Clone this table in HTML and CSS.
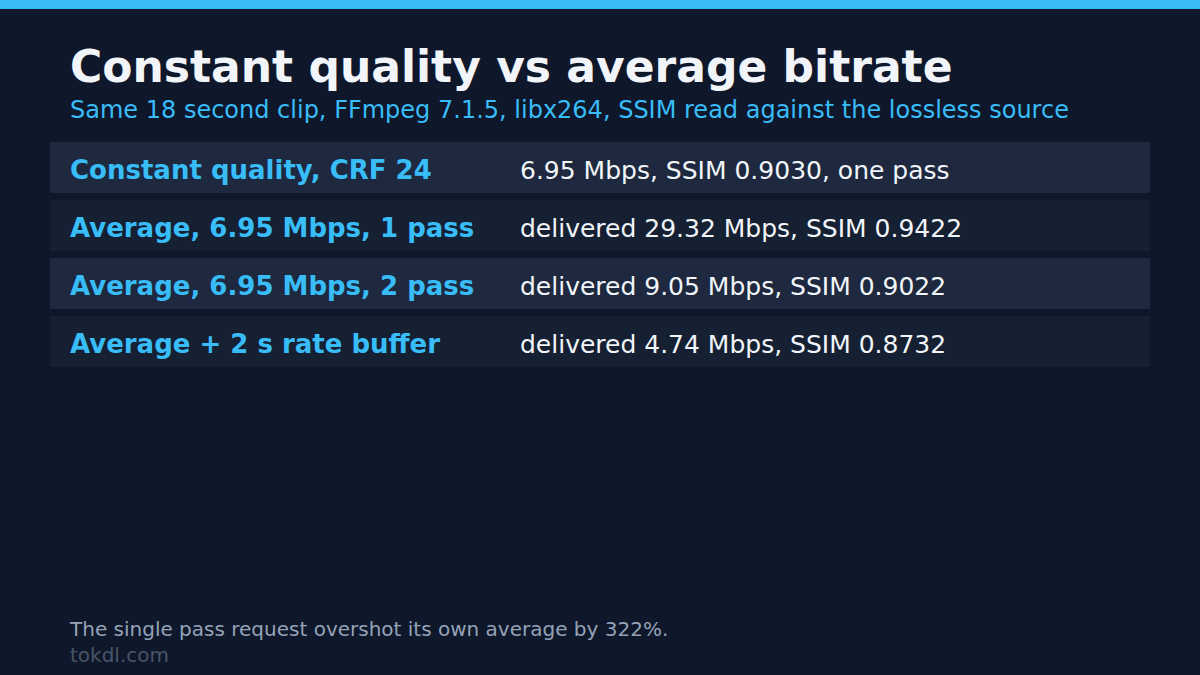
FILE: index.html
```html
<!DOCTYPE html>
<html>
<head>
<meta charset="utf-8">
<link rel="stylesheet" href="styles.css">
</head>
<body>
<div class="topbar"></div>
<main class="page">
  <h1 class="title">Constant quality vs average bitrate</h1>
  <p class="subtitle">Same 18 second clip, FFmpeg 7.1.5, libx264, SSIM read against the lossless source</p>
  <div class="rows">
    <div class="row odd"><span class="label">Constant quality, CRF 24</span><span class="value">6.95 Mbps, SSIM 0.9030, one pass</span></div>
    <div class="row even"><span class="label">Average, 6.95 Mbps, 1 pass</span><span class="value">delivered 29.32 Mbps, SSIM 0.9422</span></div>
    <div class="row odd"><span class="label">Average, 6.95 Mbps, 2 pass</span><span class="value">delivered 9.05 Mbps, SSIM 0.9022</span></div>
    <div class="row even"><span class="label">Average + 2 s rate buffer</span><span class="value">delivered 4.74 Mbps, SSIM 0.8732</span></div>
  </div>
  <footer class="footer">
    <p class="note">The single pass request overshot its own average by 322%.</p>
    <p class="site">tokdl.com</p>
  </footer>
</main>
</body>
</html>
```

FILE: styles.css
```css
html, body {
  margin: 0;
  padding: 0;
  width: 1200px;
  height: 675px;
  overflow: hidden;
  background: #0f172a;
  font-family: "DejaVu Sans", "Liberation Sans", sans-serif;
}
.topbar {
  height: 9px;
  background: #38bdf8;
}
.page {
  height: 666px;
  box-sizing: border-box;
  padding: 32px 50px 7px 50px;
  display: flex;
  flex-direction: column;
}
.title {
  margin: 0 0 0 20px;
  font-size: 44px;
  font-weight: bold;
  color: #f1f5f9;
  line-height: 1.164;
}
.subtitle {
  margin: 5px 0 0 20px;
  font-size: 24px;
  color: #38bdf8;
  line-height: 1.164;
}
.rows {
  margin-top: 17px;
  display: flex;
  flex-direction: column;
  gap: 7px;
}
.row {
  height: 51px;
  display: flex;
  align-items: center;
  padding: 5px 20px 0 20px;
  box-sizing: border-box;
}
.row.odd { background: #1e293f; }
.row.even { background: #162033; }
.label {
  width: 450px;
  font-size: 26px;
  font-weight: bold;
  color: #38bdf8;
}
.value {
  font-size: 25px;
  color: #f1f5f9;
}
.footer {
  margin-top: auto;
}
.note, .site {
  margin: 0 0 0 20px;
  font-size: 20px;
  line-height: 26px;
}
.note { color: #94a3b8; }
.site { color: #475569; }
```
